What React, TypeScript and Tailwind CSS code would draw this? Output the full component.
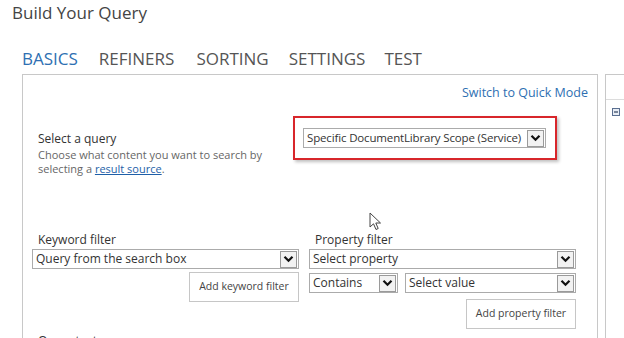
import React from "react";

const Chevron = () => (
  <svg width="11" height="8" viewBox="0 0 11 8" className="block">
    <path d="M1.5 1.8 L5.5 5.8 L9.5 1.8" fill="none" stroke="#111" strokeWidth="2.2" />
  </svg>
);

const Select = ({
  text,
  className = "",
  textClass = "text-[12px]",
}: {
  text: string;
  className?: string;
  textClass?: string;
}) => (
  <div className={`flex h-[20px] items-center border border-[#ababab] bg-white ${className}`}>
    <span className={`flex-1 truncate pl-[3px] leading-[18px] text-[#333] ${textClass}`}>{text}</span>
    <div className="mr-[1px] flex h-[17px] w-[17px] items-center justify-center border border-[#9a9a9a] bg-[#f2f2f2]">
      <Chevron />
    </div>
  </div>
);

const Btn = ({ text }: { text: string }) => (
  <div className="ml-auto flex h-[30px] w-[110px] items-center justify-center border border-[#c6c6c6] bg-white text-[10.5px] text-[#444]">
    {text}
  </div>
);

export default function App() {
  return (
    <div
      className="relative flex h-[338px] w-[624px] flex-col overflow-hidden bg-white"
      style={{ fontFamily: '"Open Sans", "Noto Sans", sans-serif' }}
    >
      <div className="pl-[12px] pt-[1px] text-[17px] leading-[24px] text-[#444]">Build Your Query</div>
      <div className="mt-[22px] flex pl-[22px] text-[17px] leading-[24px] text-[#555]">
        <span className="text-[#2e6fb2]">BASICS</span>
        <span className="ml-[21px]">REFINERS</span>
        <span className="ml-[22px]">SORTING</span>
        <span className="ml-[20px]">SETTINGS</span>
        <span className="ml-[19px]">TEST</span>
      </div>
      <div className="mt-[3px] flex flex-1">
        <div className="ml-[22px] w-[576px] border-l border-r border-t border-[#c8c8c8]">
          <div className="pr-[9px] pt-[10px] text-right text-[12.5px] leading-[16px] text-[#2e6fb2]">
            Switch to Quick Mode
          </div>
          <div className="mt-[15px] flex h-[44px]">
            <div className="w-[270px] pl-[15px] pt-[15px]">
              <div className="text-[12px] leading-[15px] text-[#333]">Select a query</div>
              <div className="mt-[2px] text-[11px] leading-[14px] text-[#666]">
                Choose what content you want to search by
                <br />
                selecting a <span className="text-[#1e5fa8] underline">result source</span>.
              </div>
            </div>
            <div className="flex h-[44px] w-[264px] items-center border-2 border-[#d8262b] pl-[8px] shadow-[2px_2px_3px_rgba(0,0,0,0.25)]">
              <Select
                text="Specific DocumentLibrary Scope (Service)"
                className="w-[243px]"
                textClass="text-[11.5px] tracking-[-0.15px]"
              />
            </div>
          </div>
          <div className="mt-[72px] flex">
            <div className="ml-[9px] flex w-[267px] flex-col">
              <div className="pl-[6px] text-[12px] leading-[16px] text-[#333]">Keyword filter</div>
              <Select text="Query from the search box" className="mt-[1px]" />
              <div className="mt-[3px] flex">
                <Btn text="Add keyword filter" />
              </div>
            </div>
            <div className="ml-[10px] flex w-[267px] flex-col">
              <div className="pl-[6px] text-[12px] leading-[16px] text-[#333]">Property filter</div>
              <Select text="Select property" className="mt-[1px]" />
              <div className="mt-[4px] flex">
                <Select text="Contains" className="w-[89px]" />
                <Select text="Select value" className="ml-[7px] flex-1" />
              </div>
              <div className="mt-[6px] flex">
                <Btn text="Add property filter" />
              </div>
            </div>
          </div>
          <div className="mt-[4px] pl-[15px] text-[12px] leading-[16px] text-[#333]">Query text</div>
        </div>
        <div className="ml-[7px] flex-1 border-l border-t border-[#c8c8c8]">
          <div className="h-[25px] border-b border-[#dcdcdc]" />
          <div className="pl-[6px] pt-[8px]">
            <svg width="8" height="8" viewBox="0 0 8 8" className="block">
              <rect x="0.5" y="0.5" width="7" height="7" fill="#e8edf5" stroke="#5a6f90" />
              <path d="M2 4 H6" stroke="#2c3e5c" strokeWidth="1.2" />
            </svg>
          </div>
        </div>
      </div>
      <svg
        width="14"
        height="20"
        viewBox="0 0 14 20"
        className="absolute left-[369px] top-[212px]"
      >
        <path
          d="M1 1 L1 15 L4.5 11.8 L7 17.5 L9.2 16.5 L6.8 11 L11.5 11 Z"
          fill="#fff"
          stroke="#444"
          strokeWidth="1"
          strokeLinejoin="round"
        />
      </svg>
    </div>
  );
}
